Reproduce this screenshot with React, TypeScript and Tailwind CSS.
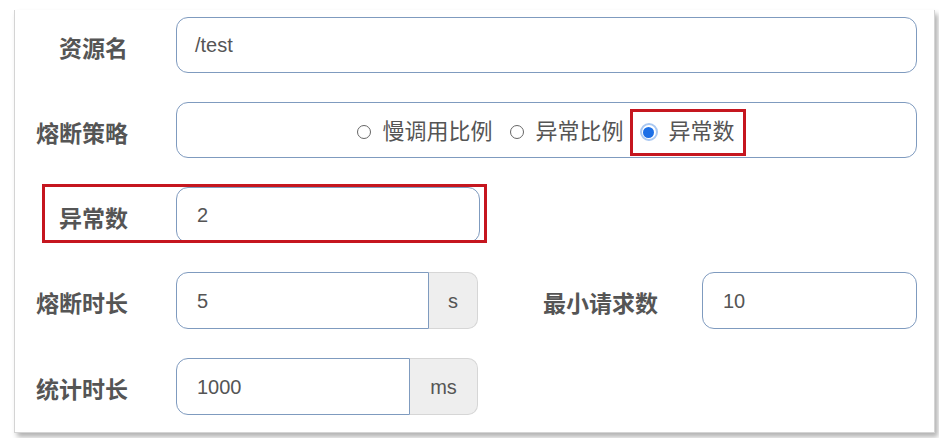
const font = { fontFamily: '"Liberation Sans", "Noto Sans CJK SC", sans-serif' }

function Label({ text, className = 'w-[113px]' }: { text: string; className?: string }) {
  return (
    <div className={`${className} shrink-0 pt-2 text-right text-[23px] font-bold leading-none text-[#555]`}>
      {text}
    </div>
  )
}

function Radio({ label, checked }: { label: string; checked?: boolean }) {
  return (
    <span className="flex items-center gap-[11px]">
      {checked ? (
        <span className="flex h-[18px] w-[18px] items-center justify-center rounded-full border-2 border-[#a9c8f2] bg-white">
          <span className="h-[11px] w-[11px] rounded-full bg-[#1c6fe6]" />
        </span>
      ) : (
        <span className="h-[14px] w-[14px] rounded-full border-[1.5px] border-[#666] bg-white" />
      )}
      <span className="text-[22px] leading-none text-[#555]">{label}</span>
    </span>
  )
}

export default function App() {
  return (
    <div className="min-h-screen bg-white pt-[10px]" style={font}>
      <div className="ml-[14px] flex w-[921px] flex-col gap-[29px] border-x border-b border-[#d4d4d4] bg-white pt-[7px] pr-[17px] pb-[17px] shadow-[3px_4px_5px_rgba(0,0,0,0.3)]">
        {/* 资源名 */}
        <div className="flex h-[56px] items-center gap-[48px]">
          <Label text="资源名" />
          <div className="flex h-full flex-1 items-center rounded-[12px] border border-[#7f9bbf] pl-[18px] text-[20px] text-[#555]">
            /test
          </div>
        </div>

        {/* 熔断策略 */}
        <div className="flex h-[56px] items-center gap-[48px]">
          <Label text="熔断策略" />
          <div className="flex h-full flex-1 items-center justify-center rounded-[12px] border border-[#7f9bbf] pt-1 pl-[10px]">
            <div className="flex items-center gap-[18px]">
              <Radio label="慢调用比例" />
              <Radio label="异常比例" />
              <span className="-ml-3 flex h-[47px] items-center border-[3px] border-[#c5161f] pr-[8px] pl-[7px]">
                <Radio label="异常数" checked />
              </span>
            </div>
          </div>
        </div>

        {/* 异常数 */}
        <div className="relative flex h-[56px] items-center gap-[48px]">
          <Label text="异常数" />
          <div className="flex h-full w-[304px] items-center rounded-[12px] border border-[#7f9bbf] pl-[20px] text-[20px] text-[#555]">
            2
          </div>
          <div className="pointer-events-none absolute top-[-3px] left-[27px] h-[59px] w-[445px] border-[3px] border-[#c5161f]" />
        </div>

        {/* 熔断时长 / 最小请求数 */}
        <div className="flex h-[57px] items-center gap-[48px]">
          <Label text="熔断时长" />
          <div className="flex h-full w-[302px] shrink-0">
            <div className="flex flex-1 items-center rounded-l-[12px] border border-[#7f9bbf] pl-[20px] text-[20px] text-[#555]">
              5
            </div>
            <div className="flex w-[49px] items-center justify-center rounded-r-[10px] border border-l-0 border-[#d6d6d6] bg-[#eeeeee] text-[20px] text-[#555]">
              s
            </div>
          </div>
          <div className="-ml-[48px] flex flex-1 items-center gap-[44px]">
            <Label text="最小请求数" className="w-[180px]" />
            <div className="flex h-[57px] flex-1 items-center rounded-[12px] border border-[#7f9bbf] pl-[20px] text-[20px] text-[#555]">
              10
            </div>
          </div>
        </div>

        {/* 统计时长 */}
        <div className="flex h-[57px] items-center gap-[48px]">
          <Label text="统计时长" />
          <div className="flex h-full w-[302px] shrink-0">
            <div className="flex flex-1 items-center rounded-l-[12px] border border-[#7f9bbf] pl-[20px] text-[20px] text-[#555]">
              1000
            </div>
            <div className="flex w-[68px] items-center justify-center rounded-r-[10px] border border-l-0 border-[#d6d6d6] bg-[#eeeeee] text-[20px] text-[#555]">
              ms
            </div>
          </div>
        </div>
      </div>
    </div>
  )
}
